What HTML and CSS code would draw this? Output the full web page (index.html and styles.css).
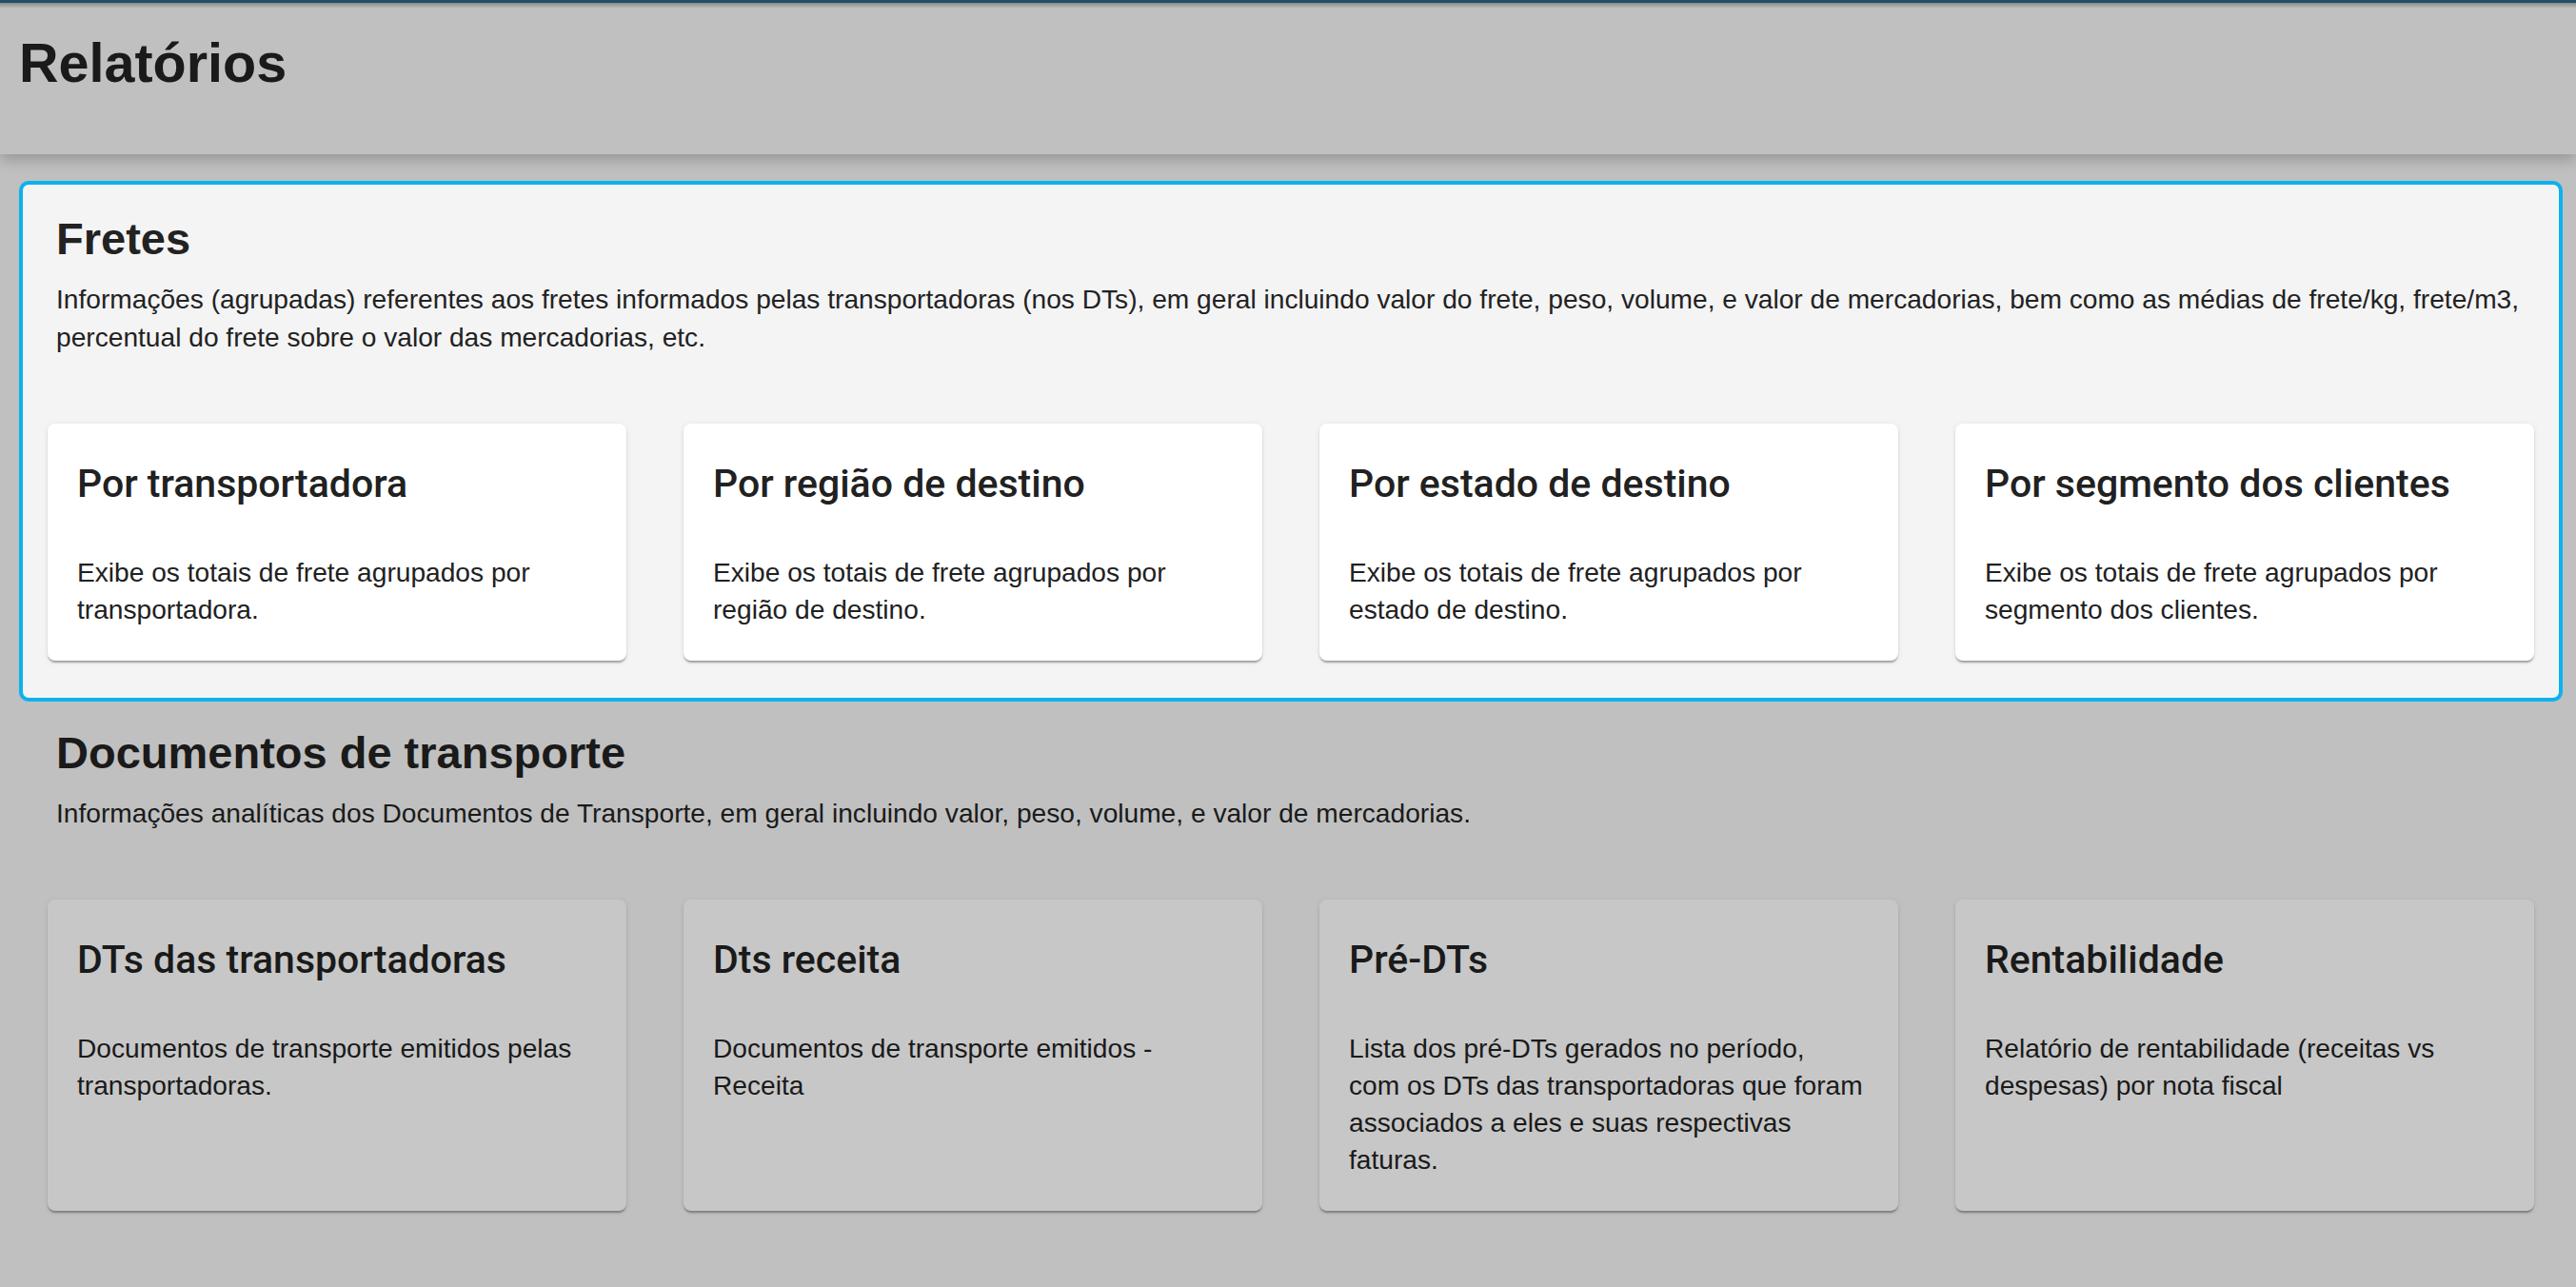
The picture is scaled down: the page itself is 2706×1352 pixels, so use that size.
FILE: index.html
```html
<!DOCTYPE html>
<html lang="pt-BR">
<head>
<meta charset="utf-8">
<title>Relatórios</title>
<link rel="stylesheet" href="styles.css">
</head>
<body>
<header class="page-header">
  <h1 class="page-title">Relatórios</h1>
</header>
<main class="content">
  <section class="report-group report-group--active">
    <h2 class="group-title">Fretes</h2>
    <p class="group-desc">Informações (agrupadas) referentes aos fretes informados pelas transportadoras (nos DTs), em geral incluindo valor do frete, peso, volume, e valor de mercadorias, bem como as médias de frete/kg, frete/m3, percentual do frete sobre o valor das mercadorias, etc.</p>
    <div class="card-grid">
      <article class="report-card">
        <h3 class="card-title">Por transportadora</h3>
        <p class="card-desc">Exibe os totais de frete agrupados por transportadora.</p>
      </article>
      <article class="report-card">
        <h3 class="card-title">Por região de destino</h3>
        <p class="card-desc">Exibe os totais de frete agrupados por região de destino.</p>
      </article>
      <article class="report-card">
        <h3 class="card-title">Por estado de destino</h3>
        <p class="card-desc">Exibe os totais de frete agrupados por estado de destino.</p>
      </article>
      <article class="report-card">
        <h3 class="card-title">Por segmento dos clientes</h3>
        <p class="card-desc">Exibe os totais de frete agrupados por segmento dos clientes.</p>
      </article>
    </div>
  </section>
  <section class="report-group report-group--dim">
    <h2 class="group-title">Documentos de transporte</h2>
    <p class="group-desc">Informações analíticas dos Documentos de Transporte, em geral incluindo valor, peso, volume, e valor de mercadorias.</p>
    <div class="card-grid">
      <article class="report-card">
        <h3 class="card-title">DTs das transportadoras</h3>
        <p class="card-desc">Documentos de transporte emitidos pelas transportadoras.</p>
      </article>
      <article class="report-card">
        <h3 class="card-title">Dts receita</h3>
        <p class="card-desc">Documentos de transporte emitidos - Receita</p>
      </article>
      <article class="report-card">
        <h3 class="card-title">Pré-DTs</h3>
        <p class="card-desc">Lista dos pré-DTs gerados no período,<br>com os DTs das transportadoras que foram associados a eles e suas respectivas faturas.</p>
      </article>
      <article class="report-card">
        <h3 class="card-title">Rentabilidade</h3>
        <p class="card-desc">Relatório de rentabilidade (receitas vs despesas) por nota fiscal</p>
      </article>
    </div>
  </section>
</main>
</body>
</html>
```
FILE: styles.css
```css
html, body {
  margin: 0;
  padding: 0;
}

body {
  background: #c0c0c0;
  color: #1a1a1a;
  font-family: "Liberation Sans", Arial, Helvetica, sans-serif;
  min-height: 1352px;
}

.page-header {
  height: 162px;
  box-sizing: border-box;
  border-top: 3px solid #234e69;
  background: linear-gradient(to bottom, rgba(0, 0, 0, 0.28), rgba(0, 0, 0, 0) 6px), #c0c0c0;
  box-shadow: 0 6px 14px rgba(0, 0, 0, 0.22);
  padding: 30px 20px 0;
}

.page-title {
  margin: 0;
  font-size: 57.5px;
  line-height: 66px;
  font-weight: 700;
  color: #1a1a1a;
}

.content {
  padding: 28px 14px 40px 20px;
}

.report-group {
  border: 4px solid transparent;
  border-radius: 10px;
  padding: 29px 26px 39px;
}

.report-group--active {
  border-color: #0cb2ee;
  background: #f4f4f4;
  color: #222222;
}

.report-group--dim {
  margin-top: -8px;
  padding-top: 30px;
  color: #1a1a1a;
}

.group-title {
  margin: 0 0 16px;
  padding-left: 9px;
  font-size: 47px;
  line-height: 56px;
  font-weight: 700;
}

.group-desc {
  margin: 0 0 70px;
  padding-left: 9px;
  font-size: 28.15px;
  line-height: 40px;
}

.card-grid {
  display: grid;
  grid-template-columns: repeat(4, 1fr);
  column-gap: 60px;
}

.report-card {
  border-radius: 8px;
  padding: 39px 30px 34px 31px;
  box-shadow: 0 3px 2px -1px rgba(0, 0, 0, 0.22), 0 2px 2px 0 rgba(0, 0, 0, 0.12), 0 1px 6px 0 rgba(0, 0, 0, 0.08);
}

.report-group--active .report-card {
  background: #ffffff;
  color: #212121;
}

.report-group--dim .report-card {
  background: #c7c7c7;
  color: #1a1a1a;
}

.card-title {
  margin: 0 0 50px;
  font-family: Roboto, "Liberation Sans", Arial, sans-serif;
  font-weight: 500;
  font-size: 41px;
  line-height: 48px;
}

.card-desc {
  margin: 0;
  font-size: 28.15px;
  line-height: 39px;
}
```
